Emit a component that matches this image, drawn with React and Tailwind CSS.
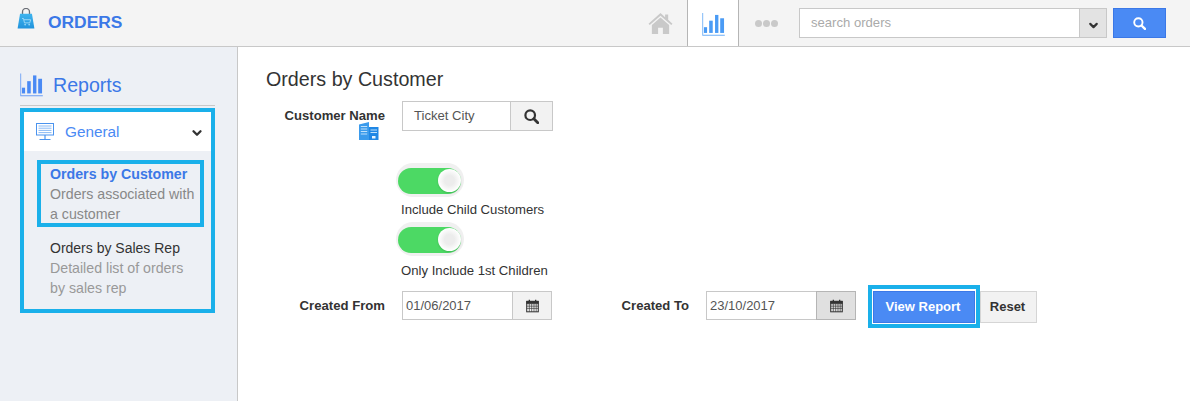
import React from 'react';
import { ChevronDown } from 'lucide-react';

const BarsIcon = ({ className }) => (
  <svg viewBox="0 0 24 24" className={className} fill="currentColor">
    <path d="M0.3 0h0.9v22.8h22.6v1H0.3z" opacity="0.8" />
    <rect x="2" y="14.8" width="3.3" height="6" />
    <rect x="7.5" y="8" width="3.7" height="12.8" />
    <rect x="13.6" y="2" width="3.5" height="18.8" />
    <rect x="19" y="5.5" width="4" height="15.3" />
  </svg>
);

const SearchGlyph = ({ className }) => (
  <svg viewBox="0 0 15 15" className={className} fill="none" stroke="currentColor">
    <circle cx="6.2" cy="6.2" r="4.8" strokeWidth="2.2" />
    <path d="M9.8 9.8 13.8 13.8" strokeWidth="2.8" strokeLinecap="round" />
  </svg>
);

const BagIcon = () => (
  <svg viewBox="0 0 20 24" className="w-[18px] h-[21px] mt-[-7px]">
    <defs>
      <linearGradient id="bag" x1="0" y1="0" x2="0" y2="1">
        <stop offset="0" stopColor="#3fb4ee" />
        <stop offset="1" stopColor="#2193dc" />
      </linearGradient>
    </defs>
    <path d="M6 8V4.5a4 4 0 0 1 8 0V8" fill="none" stroke="#6b6f76" strokeWidth="1.5" />
    <path d="M3.2 6.5h13.6L19.6 23.5H0.4z" fill="url(#bag)" />
    <path d="M5.5 12h1.6l1.2 5h6l1-3.6H7.6" fill="none" stroke="#a5dcf7" strokeWidth="1" />
    <circle cx="9" cy="19" r="0.9" fill="#a5dcf7" />
    <circle cx="13.6" cy="19" r="0.9" fill="#a5dcf7" />
  </svg>
);

const HomeIcon = () => (
  <svg viewBox="0 0 26 24" className="w-[25px] h-[23px]" fill="#c9c9c9">
    <path d="M13 1 0.5 12.2l1.3 1.4L13 3.8l11.2 9.8 1.3-1.4L21 8.2V2.5h-3.2v2.9z" />
    <path d="M13 5.8 4 13.6V23h6.5v-6.5h5V23H22v-9.4z" />
  </svg>
);

const MonitorIcon = () => (
  <svg viewBox="0 0 18 18" className="w-[18px] h-[18px]" fill="none" stroke="#4a93ee">
    <rect x="0.5" y="0.5" width="17" height="11.5" strokeWidth="1" />
    <path d="M2.5 3h13M2.5 5.2h13M2.5 7.4h13M2.5 9.6h13" strokeWidth="1" opacity="0.65" />
    <path d="M9 12v4M3.5 16.5h11" strokeWidth="1.2" />
  </svg>
);

const BuildingIcon = () => (
  <svg viewBox="0 0 20 18" className="w-[20px] h-[18px]">
    <path d="M0 18V2.5L10 0v18z" fill="#3b9bec" />
    <path d="M10 5h9.5v13H10z" fill="#1f87e5" />
    <path d="M1.8 4.5h6.4M1.8 7h6.4M1.8 9.5h6.4M1.8 12h6.4M11.5 8h6.5M11.5 10.5h6.5" stroke="#bfe0fa" strokeWidth="1" />
    <rect x="13" y="14" width="3.5" height="2.5" fill="#e8f4fd" />
  </svg>
);

const CalendarIcon = () => (
  <svg viewBox="0 0 14 14" className="w-[13px] h-[14px]" fill="none" stroke="#333">
    <rect x="0.75" y="2" width="12.5" height="11.25" strokeWidth="1.1" />
    <path d="M0.75 2h12.5v2.6H0.75z" fill="#333" strokeWidth="0.6" />
    <path d="M3.6 4.6v8.6M6.1 4.6v8.6M8.6 4.6v8.6M11 4.6v8.6M0.75 7.2h12.5M0.75 9.6h12.5" strokeWidth="0.7" />
    <path d="M3.6 0.4v2.4M10.4 0.4v2.4" strokeWidth="1.4" />
  </svg>
);

const Toggle = () => (
  <div className="w-[68px] h-[34px] ml-[-6px] rounded-full bg-[#f0f0f0] flex items-center pl-[2px] pt-[1px]">
    <div className="w-[63px] h-[26px] rounded-full bg-[#4cd964] flex items-center justify-end pb-px">
      <div className="w-[23px] h-[23px] rounded-full bg-[radial-gradient(circle,#ececec_30%,#ffffff_70%)] shadow-[0_1px_2px_rgba(0,0,0,0.15)]" />
    </div>
  </div>
);

const DateField = ({ value, active }) => (
  <div className="flex h-[29px] w-[150px]">
    <div className="w-[110px] border border-[#c8c8c8] border-r-0 bg-white pl-[3px] flex items-center text-[13px] text-[#555]">{value}</div>
    <div className={`flex-1 border flex items-center justify-center ${active ? 'bg-[#e0e0e0] border-[#b5b5b5]' : 'bg-[#f2f2f2] border-[#c8c8c8]'}`}>
      <CalendarIcon />
    </div>
  </div>
);

export default function App() {
  return (
    <div className="w-[1190px] h-[401px] flex flex-col bg-white text-[#333] overflow-hidden font-['Liberation_Sans',Arial,sans-serif]">
      {/* top bar */}
      <header className="h-[47px] shrink-0 flex items-stretch bg-[#f4f4f4] border-b border-[#c8c8c8]">
        <div className="flex items-center pl-[17px] pb-[2px]">
          <BagIcon />
          <span className="ml-[13px] text-[17.4px] font-bold text-[#3b78e7]">ORDERS</span>
        </div>
        <div className="ml-auto flex items-center">
          <div className="mr-[14px]"><HomeIcon /></div>
          <div className="w-[52px] h-[46px] bg-white border-x border-[#b5b5b5] flex items-center justify-center text-[#4a9bf5] pt-[3px]">
            <BarsIcon className="w-[23px] h-[25px]" />
          </div>
          <div className="w-[60px] flex justify-center gap-[1px] pr-[5px]">
            <span className="w-[7px] h-[7px] rounded-full bg-[#c9c9c9]" />
            <span className="w-[7px] h-[7px] rounded-full bg-[#c9c9c9]" />
            <span className="w-[7px] h-[7px] rounded-full bg-[#c9c9c9]" />
          </div>
          <div className="flex h-[30px] w-[308px]">
            <div className="flex-1 bg-white border border-[#c8c8c8] border-r-0 pl-[11px] flex items-center text-[13.1px] text-[#aaa]">search orders</div>
            <div className="w-[28px] bg-[#e3e3e3] border border-[#c8c8c8] flex items-center justify-center pt-[4px]">
              <ChevronDown size={13} strokeWidth={4} className="text-[#333]" />
            </div>
          </div>
          <div className="ml-[6px] mr-[24px] w-[53px] h-[30px] bg-[#4a8af4] border border-[#3b78e7] flex items-center justify-center">
            <SearchGlyph className="w-[13px] h-[13px] text-white" />
          </div>
        </div>
      </header>

      <div className="flex-1 flex min-h-0">
        {/* sidebar */}
        <aside className="w-[238px] shrink-0 bg-[#edf0f5] border-r border-[#c8c8c8] pt-[22px] pl-[20px] pr-[22px]">
          <div className="flex items-center h-[32px] text-[#4a8af4]">
            <BarsIcon className="w-[23px] h-[24px]" />
            <span className="ml-[10px] pt-[2px] text-[19.6px] text-[#3b78e7]">Reports</span>
          </div>
          <div className="mt-[4px] h-px bg-[#c8c8c8]" />
          <div className="mt-[2px] h-[205px] border-[4px] border-[#1ab0ea]">
            <div className="h-[39px] bg-white flex items-center pl-[12px] pr-[7px]">
              <MonitorIcon />
              <span className="ml-[11px] pt-[2px] text-[15.3px] text-[#4a8af4]">General</span>
              <ChevronDown size={14} strokeWidth={4} className="ml-auto text-[#333] mt-[3px]" />
            </div>
            <div className="mt-[9px] ml-[13px] w-[167px] h-[67px] border-[4px] border-[#1ab0ea] pl-[9px] text-[14.2px] leading-[20px] text-[#888]">
              <div className="font-bold text-[#3b78e7] whitespace-nowrap">Orders by Customer</div>
              <div className="whitespace-nowrap">Orders associated with</div>
              <div>a customer</div>
            </div>
            <div className="mt-[11px] ml-[26px] text-[14.2px] leading-[20px] text-[#999]">
              <div className="text-[14px] text-[#333]">Orders by Sales Rep</div>
              <div>Detailed list of orders</div>
              <div>by sales rep</div>
            </div>
          </div>
        </aside>

        {/* main content */}
        <main className="flex-1 pl-[28px] pt-[20px]">
          <h1 className="text-[19.7px] leading-[24px] text-[#333]">Orders by Customer</h1>

          <div className="mt-[10px] flex h-[30px]">
            <div className="w-[119px] flex flex-col items-end pt-[7px]">
              <span className="text-[13.1px] leading-[16px] font-bold whitespace-nowrap">Customer Name</span>
              <span className="mr-[6px] mt-[-2px]"><BuildingIcon /></span>
            </div>
            <div className="ml-[17px] flex h-[30px] w-[151px]">
              <div className="w-[108px] bg-white border border-[#c8c8c8] border-r-0 pl-[11px] flex items-center text-[13.1px] text-[#555]">Ticket City</div>
              <div className="flex-1 bg-[#f2f2f2] border border-[#c8c8c8] flex items-center justify-center">
                <SearchGlyph className="w-[15px] h-[15px] text-[#333]" />
              </div>
            </div>
          </div>

          <div className="ml-[136px] mt-[32px]">
            <Toggle />
            <div className="mt-[5px] text-[13.15px] leading-[16px] ml-[-1px]">Include Child Customers</div>
            <div className="mt-[4px]"><Toggle /></div>
            <div className="mt-[7px] text-[13.15px] leading-[16px] ml-[-1px]">Only Include 1st Children</div>
          </div>

          <div className="mt-[12px] flex items-start">
            <div className="w-[119px] h-[29px] flex items-center justify-end text-[13.15px] font-bold whitespace-nowrap">Created From</div>
            <div className="ml-[17px]"><DateField value="01/06/2017" /></div>
            <div className="ml-[69px] w-[68px] h-[29px] flex items-center justify-end text-[13.1px] font-bold whitespace-nowrap">Created To</div>
            <div className="ml-[17px]"><DateField value="23/10/2017" active /></div>
            <div className="ml-[12px] mt-[-6px] w-[112px] h-[43px] border-[4px] border-[#1ab0ea] px-px pt-[2px] pb-px bg-white">
              <div className="h-full bg-[#4a8af4] border border-[#3b78e7] flex items-center justify-center pr-[2px] text-[13px] font-bold text-white">View Report</div>
            </div>
            <div className="w-[57px] h-[32px] bg-[#f2f2f2] border border-[#d5d5d5] flex items-center justify-center pr-[2px] text-[13px] font-bold">Reset</div>
          </div>
        </main>
      </div>
    </div>
  );
}
